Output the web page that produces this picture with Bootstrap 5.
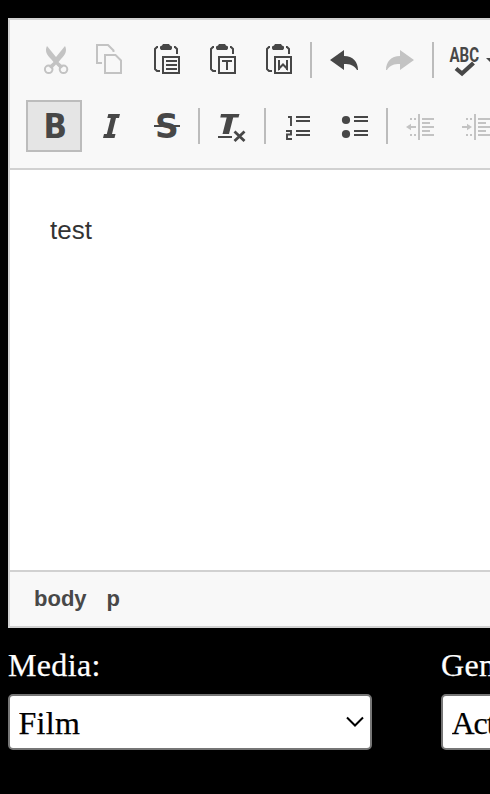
<!DOCTYPE html>
<html lang="en">
<head>
<meta charset="utf-8">
<meta name="viewport" content="width=device-width, initial-scale=1">
<title>Editor</title>
<link href="https://cdn.jsdelivr.net/npm/bootstrap@5.3.0/dist/css/bootstrap.min.css" rel="stylesheet">
<style>
body{background:#000;height:794px;font-family:"Liberation Sans",Arial,sans-serif}
.page-wrap{padding:18px 0 0 8px;width:813px}
.editor{border:2px solid #d1d1d1;height:610px;background:#fff}
.tools{background:#f8f8f8;border-bottom:2px solid #d1d1d1;height:150px;padding:14px 0 0 16px}
.tool-row{height:52px;margin-bottom:14px}
.tool{width:56px;height:52px;padding:0;border:0;border-radius:0;color:#474747;line-height:0;flex:none}
.tool svg{width:56px;height:52px;display:block;fill:currentColor}
.tool.off{color:#c3c3c3;opacity:1;border:0}
.tool.pressed{background:#e5e5e5;box-shadow:inset 0 0 0 2px #bcbcbc}
.divider{width:2px;height:36px;margin:8px 4px 0;background:#bcbcbc;flex:none}
.ln{fill:none;stroke:currentColor;stroke-width:2}
.glyph{font:bold 33px "DejaVu Sans",Verdana,sans-serif}
.abc{font:700 20px Roboto,sans-serif}
.content{padding:42px 40px;font-size:26px;line-height:36px;color:#333}
.content p{margin:0}
.path-bar{background:#f8f8f8;border-top:2px solid #d1d1d1;height:56px;padding:0 24px 2px;gap:20px;font-size:22px;font-weight:700;color:#484848}
.fields{gap:69px;margin-top:16px;font-family:"Liberation Serif","Times New Roman",serif;font-size:32px}
.field{width:364px;flex:none}
.field label{color:#fff;line-height:42px;height:50px;display:block;letter-spacing:.35px;-webkit-text-stroke:.25px #fff}
.field .form-select{height:56px;font-size:32px;line-height:48px;color:#000;border:2px solid #767676;border-radius:5px;padding:3px 40px 1px 8.5px;letter-spacing:.3px;-webkit-text-stroke:.25px #000;background:#fff url("data:image/svg+xml,%3Csvg xmlns='http://www.w3.org/2000/svg' viewBox='0 0 18 12'%3E%3Cpath d='M1 1.5 9 9.5 17 1.5' fill='none' stroke='%23000' stroke-width='2'/%3E%3C/svg%3E") no-repeat right 6px center/18px 12px}
.field #genre{letter-spacing:-1px}
</style>
<script src="https://cdn.jsdelivr.net/npm/bootstrap@5.3.0/dist/js/bootstrap.bundle.min.js"></script>
</head>
<body class="overflow-hidden">
<main class="page-wrap">
<section class="editor d-flex flex-column">
<div class="tools">
<div class="tool-row d-flex">
<button class="btn tool off" disabled aria-label="Cut"><svg viewBox="26 34 56 52"><path d="M47 46c-2.500 5 0 9 4 13l2.500 3-5 4.500 3 2.500 4.500-4.500 4.500 4.500 3-2.500-5-4.500 2.500-3c4-4 6.500-8 4-13l-9 11z"/><circle class="ln" cx="48.7" cy="69.3" r="3.8"/><circle class="ln" cx="63.5" cy="69.3" r="3.8"/></svg></button>
<button class="btn tool off" disabled aria-label="Copy"><svg viewBox="82 34 56 52"><path class="ln" d="M102 63H97V45h11l5.500 5.500V52M105 55h10.500l5.500 5.500V73H105z"/></svg></button>
<button class="btn tool" aria-label="Paste"><svg viewBox="138 34 56 52"><path class="ln" d="M158 47h-1l-2 2v20l2 2h3M174 47h1l2 2v5M163 57h16v16h-16zM166 61h11M166 65h11M166 69h11"/><path d="M160 46.500l2-1 1-1.500h6l1 1.500 2 1v2l-1 1.500h-10l-1-1.500z"/></svg></button>
<button class="btn tool" aria-label="Paste as plain text"><svg viewBox="194 34 56 52"><path class="ln" d="M214 47h-1l-2 2v20l2 2h3M230 47h1l2 2v5M219 57h16v16h-16zM222 61h10M227 61v9"/><path d="M216 46.500l2-1 1-1.500h6l1 1.500 2 1v2l-1 1.500h-10l-1-1.500z"/></svg></button>
<button class="btn tool" aria-label="Paste from Word"><svg viewBox="250 34 56 52"><path class="ln" d="M270 47h-1l-2 2v20l2 2h3M286 47h1l2 2v5M275 57h16v16h-16zM279 60v8.500l4-4 4 4V60"/><path d="M278 60h2v10h-2zM286 60h2v10h-2zM272 46.500l2-1 1-1.500h6l1 1.500 2 1v2l-1 1.500h-10l-1-1.500z"/></svg></button>
<span class="divider"></span>
<button class="btn tool" aria-label="Undo"><svg viewBox="316 34 56 52"><path d="M330 60l14-10v6c9 0 14 6 14 14h-1c-3-5-7-6-13-6v6z"/></svg></button>
<button class="btn tool off" disabled aria-label="Redo"><svg viewBox="372 34 56 52"><path d="M414 60l-14-10v6c-9 0-14 6-14 14h1c3-5 7-6 13-6v6z"/></svg></button>
<span class="divider"></span>
<button class="btn tool" aria-label="Spell check"><svg viewBox="438 34 56 52"><text class="abc" x="449.500" y="62" textLength="29.500" lengthAdjust="spacingAndGlyphs">ABC</text><path d="M456 68.500l6 6 11.500-12" fill="none" stroke="#f8f8f8" stroke-width="6"/><path d="M456 68.500l6 5 11.500-10.500" fill="none" stroke="currentColor" stroke-width="4.200"/><path d="M486 58h12l-6 6z"/></svg></button>
</div>
<div class="tool-row d-flex">
<button class="btn tool pressed" aria-label="Bold"><svg viewBox="26 100 56 52"><text class="glyph" x="43.400" y="138" textLength="23.500" lengthAdjust="spacingAndGlyphs">B</text></svg></button>
<button class="btn tool" aria-label="Italic"><svg viewBox="82 100 56 52"><path d="M108.300 114H120l-1 4h-3l-4 16h3.500l-1 4H103l1-4h2.800l4-16h-3.500z"/></svg></button>
<button class="btn tool" aria-label="Strikethrough"><svg viewBox="138 100 56 52"><text class="glyph" x="155" y="138">S</text><path d="M154 125h26v2h-26z"/></svg></button>
<span class="divider"></span>
<button class="btn tool" aria-label="Remove format"><svg viewBox="204 100 56 52"><path d="M221 114h18.500l-1 3.500H233.200l-4.200 16.500h-6.500l4.200-16.500h-6.400zM218 136h14v2h-14z"/><path d="M234.500 131.500l10 9.500M244.500 131.500l-10 9.500" fill="none" stroke="currentColor" stroke-width="2.800"/></svg></button>
<span class="divider"></span>
<button class="btn tool" aria-label="Numbered list"><svg viewBox="270 100 56 52"><path d="M296 116h14v2h-14zM296 120h14v2h-14zM296 130h14v2h-14zM296 134h14v2h-14z"/><path d="M288 117h3v9M286 131h5v3.500h-4V139h5" fill="none" stroke="currentColor" stroke-width="1.900"/></svg></button>
<button class="btn tool" aria-label="Bulleted list"><svg viewBox="326 100 56 52"><circle cx="346" cy="120" r="4.100"/><circle cx="346" cy="134" r="4.100"/><path d="M354 116h14v2h-14zM354 120h14v2h-14zM354 130h14v2h-14zM354 134h14v2h-14z"/></svg></button>
<span class="divider"></span>
<button class="btn tool off" disabled aria-label="Decrease indent"><svg viewBox="392 100 56 52"><path d="M418 114h2v26h-2zM422 118h12v2h-12zM422 122h8v2h-8zM422 126h12v2h-12zM422 130h8v2h-8zM422 134h12v2h-12zM410 118h2v2h-2zM414 118h2v2h-2zM410 134h2v2h-2zM414 134h2v2h-2zM406 127l5-3.200V126h5v2h-5v2.200z"/></svg></button>
<button class="btn tool off" disabled aria-label="Increase indent"><svg viewBox="448 100 56 52"><path d="M474 114h2v26h-2zM478 118h12v2h-12zM478 122h8v2h-8zM478 126h12v2h-12zM478 130h8v2h-8zM478 134h12v2h-12zM466 118h2v2h-2zM470 118h2v2h-2zM466 134h2v2h-2zM470 134h2v2h-2zM472 127l-5-3.200V126h-5v2h5v2.200z"/></svg></button>
</div>
</div>
<div class="content flex-grow-1"><p>test</p></div>
<div class="path-bar d-flex align-items-center"><span>body</span><span>p</span></div>
</section>
<form class="fields d-flex">
<div class="field"><label for="media">Media:</label><select class="form-select" id="media"><option>Film</option></select></div>
<div class="field"><label for="genre">Genre:</label><select class="form-select" id="genre"><option>Action</option></select></div>
</form>
</main>
</body>
</html>
